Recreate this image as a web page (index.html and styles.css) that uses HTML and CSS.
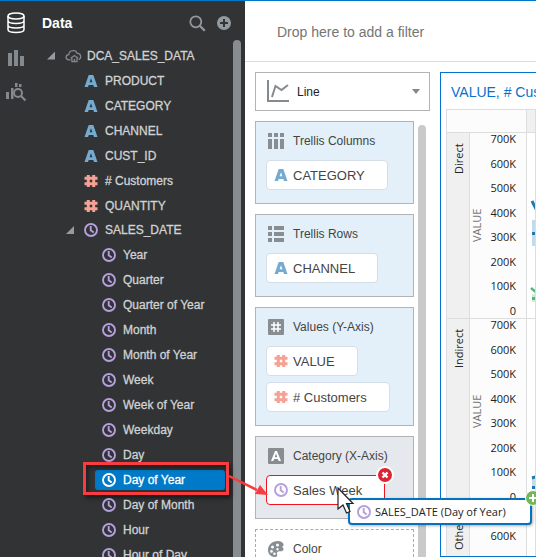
FILE: index.html
```html
<!DOCTYPE html>
<html lang="en">
<head>
<meta charset="utf-8">
<title>Data visualization</title>
<link rel="stylesheet" href="styles.css">
</head>
<body>
<svg class="defs" aria-hidden="true">
  <symbol id="attr" viewBox="0 0 14 12"><path fill-rule="evenodd" d="M4.700 0h4.600l4.200 12h-3.500l-.7-2H4.700L4 12H.5zM7 3.300L5.600 7.300h2.800z"/></symbol>
  <symbol id="hash" viewBox="0 0 14 12"><path d="M4.300 0v12M9.700 0v12M.5 3.300h13M.5 8.700h13" fill="none" stroke="currentColor" stroke-width="3"/></symbol>
  <symbol id="clock" viewBox="0 0 14 14"><circle cx="7" cy="7" r="6" fill="none" stroke="currentColor" stroke-width="1.900"/><path d="M6.700 3v4.200l3 2.200" fill="none" stroke="currentColor" stroke-width="1.900"/></symbol>
</svg>
<div class="app">
  <nav class="rail" aria-label="Panels">
    <button class="rail-button active" aria-label="Data"><svg width="18" height="22" viewBox="0 0 18 22"><g fill="none" stroke="currentColor" stroke-width="1.500"><ellipse cx="9" cy="4" rx="8" ry="3"/><path d="M1 4v13.500c0 4 16 4 16 0V4M1 8.500c0 4 16 4 16 0M1 13c0 4 16 4 16 0"/></g></svg></button>
    <button class="rail-button" aria-label="Visualizations"><svg width="18" height="18" viewBox="0 0 18 18"><path d="M1 4h4v13H1zM7 1h4v16H7zM13 7h4v10h-4z"/></svg></button>
    <button class="rail-button" aria-label="Analytics"><svg width="21" height="20" viewBox="0 0 21 20"><path d="M0 10h3v7H0zM5 6h2.500v11H5zM9 1h2.500v4H9zM13 2h2.500v3H13z"/><circle cx="12" cy="11" r="4" fill="none" stroke="currentColor" stroke-width="2"/><path d="M15 14l4.500 4.500" stroke="currentColor" stroke-width="2.200"/></svg></button>
  </nav>
  <aside class="sidebar">
    <header class="sidebar-head">
      <h1>Data</h1>
      <button aria-label="Search"><svg width="17" height="17" viewBox="0 0 17 17"><circle cx="6.800" cy="6.800" r="5.500" fill="none" stroke="currentColor" stroke-width="1.800"/><path d="M10.800 10.800l5 5" stroke="currentColor" stroke-width="2.200"/></svg></button>
      <button aria-label="Add"><svg width="14" height="14" viewBox="0 0 14 14"><circle cx="7" cy="7" r="7"/><path d="M7 3v8M3 7h8" stroke="#313335" stroke-width="2"/></svg></button>
    </header>
    <div class="tree-area">
      <ul class="tree">
        <li class="root"><i class="twisty"></i><svg class="cloud" width="17" height="14" viewBox="0 0 18 14"><g fill="none" stroke="currentColor" stroke-width="1.300"><path d="M6 11H4.200C.3 11 0 6 4 5.600 4.500 0 12 0 12.800 4.300c4.600-.3 4.800 5.600 1.700 6.500"/><path d="M6 9.300l4-2.800 4 2.800M7.300 9v4h5.400V9"/></g><path d="M9.200 10h1.600v3H9.200z"/></svg>DCA_SALES_DATA</li>
        <li class="field"><svg class="ico attr"><use href="#attr"/></svg>PRODUCT</li>
        <li class="field"><svg class="ico attr"><use href="#attr"/></svg>CATEGORY</li>
        <li class="field"><svg class="ico attr"><use href="#attr"/></svg>CHANNEL</li>
        <li class="field"><svg class="ico attr"><use href="#attr"/></svg>CUST_ID</li>
        <li class="field"><svg class="ico hash"><use href="#hash"/></svg># Customers</li>
        <li class="field"><svg class="ico hash"><use href="#hash"/></svg>QUANTITY</li>
        <li class="date"><i class="twisty"></i><svg class="ico clock"><use href="#clock"/></svg>SALES_DATE</li>
        <li class="part"><svg class="ico clock"><use href="#clock"/></svg>Year</li>
        <li class="part"><svg class="ico clock"><use href="#clock"/></svg>Quarter</li>
        <li class="part"><svg class="ico clock"><use href="#clock"/></svg>Quarter of Year</li>
        <li class="part"><svg class="ico clock"><use href="#clock"/></svg>Month</li>
        <li class="part"><svg class="ico clock"><use href="#clock"/></svg>Month of Year</li>
        <li class="part"><svg class="ico clock"><use href="#clock"/></svg>Week</li>
        <li class="part"><svg class="ico clock"><use href="#clock"/></svg>Week of Year</li>
        <li class="part"><svg class="ico clock"><use href="#clock"/></svg>Weekday</li>
        <li class="part"><svg class="ico clock"><use href="#clock"/></svg>Day</li>
        <li class="part selected"><span class="pick"><svg class="ico clock"><use href="#clock"/></svg>Day of Year</span><span class="callout"></span></li>
        <li class="part"><svg class="ico clock"><use href="#clock"/></svg>Day of Month</li>
        <li class="part"><svg class="ico clock"><use href="#clock"/></svg>Hour</li>
        <li class="part"><svg class="ico clock"><use href="#clock"/></svg>Hour of Day</li>
      </ul>
      <div class="scroll"></div>
    </div>
  </aside>
  <main class="main">
    <div class="filter-bar">Drop here to add a filter</div>
    <div class="work">
      <section class="grammar">
        <div class="type-box">
          <svg class="type-icon" width="22" height="22" viewBox="0 0 22 22"><path d="M1 0v21h21" fill="none" stroke="currentColor" stroke-width="2"/><path d="M5 17L8.500 6l6 4L21 5" fill="none" stroke="currentColor" stroke-width="2"/></svg>
          <select class="type" aria-label="Visualization type"><option>Line</option></select>
        </div>
        <div class="shelves-area">
          <div class="shelves">
            <section class="shelf">
              <h2><svg class="sico"><path d="M0 0h4v4H0zM6 0h4v4H6zM12 0h4v4h-4zM0 6h4v10H0zM6 6h4v10H6zM12 6h4v10h-4z"/></svg>Trellis Columns</h2>
              <div class="chip"><svg class="ico attr"><use href="#attr"/></svg>CATEGORY</div>
            </section>
            <section class="shelf">
              <h2><svg class="sico"><path d="M0 0h4v4H0zM6 0h10v4H6zM0 6h4v4H0zM6 6h10v4H6zM0 12h4v4H0zM6 12h10v4H6z"/></svg>Trellis Rows</h2>
              <div class="chip"><svg class="ico attr"><use href="#attr"/></svg>CHANNEL</div>
            </section>
            <section class="shelf">
              <h2><svg class="sico"><rect width="16" height="16" rx="1"/><path d="M6 3v10M10 3v10M3 6h10M3 10h10" stroke="#fff" stroke-width="1.500"/></svg>Values (Y-Axis)</h2>
              <div class="chip"><svg class="ico hash"><use href="#hash"/></svg>VALUE</div>
              <div class="chip"><svg class="ico hash"><use href="#hash"/></svg># Customers</div>
            </section>
            <section class="shelf over">
              <h2><svg class="sico"><rect width="16" height="16" rx="1"/><path d="M7 3h2l4 10h-2.300l-.8-2H6.100l-.8 2H3zM8 5.500L6.700 9.200h2.600z" fill="#fff" fill-rule="evenodd"/></svg>Category (X-Axis)</h2>
              <div class="chip target"><svg class="ico clock"><use href="#clock"/></svg>Sales Week
                <button class="remove" aria-label="Remove"><svg width="18" height="18" viewBox="0 0 18 18"><circle cx="9" cy="9" r="8" fill="#dc2433" stroke="#fff" stroke-width="2"/><path d="M6.500 6.500l5 5M11.500 6.500l-5 5" stroke="#fff" stroke-width="2.400"/></svg></button>
              </div>
            </section>
            <section class="shelf empty">
              <h2><svg class="sico"><path fill-rule="evenodd" d="M10 0C4 0 0 4 0 9c0 4 3 7 6.500 7 3 0 3-1.500 2.500-3-.5-2 1-3 3-2.700 2 .2 3.500-.8 3.500-2.300 0-1.300-.8-1.800-2-2 2-.6 2.500-2 1.800-3.300C14.300 1 12.500 0 10 0zM4.500 4.500a1.500 1.500 0 1 1 0 3 1.500 1.500 0 0 1 0-3zM9.500 2.500a1.500 1.500 0 1 1 0 3 1.500 1.500 0 0 1 0-3zM3.500 9a1.400 1.400 0 1 1 0 2.800 1.400 1.400 0 0 1 0-2.800zM9.500 7a1.200 1.200 0 1 1 0 2.400 1.200 1.200 0 0 1 0-2.400zM6.500 11.500a1.300 1.300 0 1 1 0 2.600 1.300 1.300 0 0 1 0-2.600z"/></svg>Color</h2>
            </section>
          </div>
          <div class="scroll light"></div>
        </div>
      </section>
      <section class="viz">
        <h2 class="viz-title">VALUE, # Customers</h2>
        <div class="trellis">
          <div class="corner"></div><div class="col-head"></div>
          <div class="row-head">Direct</div>
          <div class="axis"><span class="axis-name">VALUE</span><div class="ticks"><span>700K</span><span>600K</span><span>500K</span><span>400K</span><span>300K</span><span>200K</span><span>100K</span><span>0</span></div></div>
          <div class="plot"><svg width="10" height="186"><path d="M5 68l6 12" stroke="#1f78b0" stroke-width="3"/><path d="M5 87h6v26H5z" fill="#c3daea"/><path d="M5 99h3v3H5z" fill="#1f78b0"/><path d="M4 155l6 5" stroke="#55b57c" stroke-width="2.500"/><path d="M5 161h6v8H5z" fill="#cdebd8"/><path d="M5 164h3v3H5z" fill="#55b57c"/></svg></div>
          <div class="row-head">Indirect</div>
          <div class="axis"><span class="axis-name">VALUE</span><div class="ticks"><span>700K</span><span>600K</span><span>500K</span><span>400K</span><span>300K</span><span>200K</span><span>100K</span><span>0</span></div></div>
          <div class="plot"><svg width="10" height="186"><path d="M5 158h6v12H5z" fill="#c3daea"/><path d="M5 159l6-2" stroke="#1f78b0" stroke-width="3"/><path d="M5 167h3v3H5z" fill="#1f78b0"/></svg></div>
          <div class="row-head">Others</div>
          <div class="axis"><span class="axis-name">VALUE</span><div class="ticks"><span>700K</span><span>600K</span><span>500K</span><span>400K</span><span>300K</span><span>200K</span><span>100K</span><span>0</span></div></div>
          <div class="plot"></div>
        </div>
      </section>
    </div>
  </main>
  <svg class="arrow" width="42" height="30" viewBox="0 0 42 30"><path d="M1 4l28 14" stroke="#f83c40" stroke-width="2.500"/><path d="M40 23l-13-1 5-9z" fill="#f83c40"/></svg>
  <div class="drag"><svg class="ico clock"><use href="#clock"/></svg>SALES_DATE (Day of Year)
    <svg class="plus" width="16" height="16" viewBox="0 0 16 16"><circle cx="8" cy="8" r="7.500" fill="#74b65a" stroke="#fff"/><path d="M8 4v8M4 8h8" stroke="#fff" stroke-width="2"/></svg>
  </div>
  <svg class="cursor" width="20" height="28" viewBox="0 0 20 28"><path d="M1 1v21l5-4 3.500 8 3.500-1.500-3.500-8H16z" fill="#fff" stroke="#222" stroke-width="1.200"/></svg>
</div>
</body>
</html>
```
FILE: styles.css
```css
* { box-sizing: border-box; }
body { margin: 0; font: 12px "Liberation Sans", Arial, sans-serif; color: #333; }
h1, h2, ul { margin: 0; padding: 0; }
button { border: 0; padding: 0; background: none; color: inherit; display: flex; }
svg { fill: currentColor; flex: none; display: block; }
.defs { position: absolute; width: 0; height: 0; }

.app { position: relative; display: flex; height: 100vh; overflow: hidden; border-top: 1px solid #0078c8; background: #fff; }

.rail { width: 32px; flex: none; display: flex; flex-direction: column; align-items: center; gap: 15px; padding-top: 11px; background: #313335; color: #84898d; }
.rail-button.active { color: #fff; }

.sidebar { width: 213px; flex: none; display: flex; flex-direction: column; background: #313335; color: #d0d2d3; }
.sidebar-head { display: flex; align-items: center; gap: 11px; height: 39px; flex: none; padding: 5px 14px 0 10px; color: #94999d; }
.sidebar-head h1 { flex: 1; font-size: 14px; color: #fff; }
.tree-area { display: flex; flex: 1; min-height: 0; padding-right: 4px; }
.tree { flex: 1; list-style: none; padding-top: 3px; -webkit-text-stroke: 0.3px currentColor; }
.tree li { display: flex; align-items: center; gap: 7px; height: 25px; white-space: nowrap; }
.tree .root { padding-left: 15px; gap: 5px; }
.tree .root .twisty { margin-right: 5px; }
.cloud { color: #85898c; }
.tree .field { padding-left: 52px; }
.tree .date { padding-left: 34px; height: 24px; }
.tree .date .twisty { margin-right: 3px; }
.tree .part { padding-left: 70px; position: relative; }
.twisty { width: 8px; height: 8px; background: #979b9e; clip-path: polygon(100% 0, 100% 100%, 0 100%); }
.tree .selected { padding: 0 8px 0 63px; }
.pick { flex: 1; display: flex; align-items: center; gap: 7px; height: 20px; padding-left: 7px; border-radius: 3px; background: #007ac8; color: #fff; }
.pick .ico.clock { color: #fff; }
.callout { position: absolute; left: 51px; right: 4px; top: -5px; height: 33px; border: 3px solid #f83c40; box-shadow: 2px 3px 4px rgba(0,0,0,.5), inset 2px 3px 4px rgba(0,0,0,.4); }
.scroll { width: 8px; border-radius: 4px 4px 0 0; background: #878c90; }
.scroll.light { background: #cacaca; margin-top: 4px; }

.ico { width: 14px; height: 12px; }
.ico.attr { color: #75abd0; }
.ico.hash { color: #f5a193; }
.ico.clock { height: 14px; color: #b59fdc; }

.main { flex: 1; min-width: 0; display: flex; flex-direction: column; }
.filter-bar { display: flex; align-items: center; height: 61px; flex: none; padding: 2px 0 0 32px; border-bottom: 1px solid #d7dde4; font-size: 14px; color: #757575; white-space: nowrap; }
.work { flex: 1; min-height: 0; display: flex; gap: 10px; padding: 10px 0 0 10px; }
.grammar { width: 175px; flex: none; display: flex; flex-direction: column; gap: 10px; }
.type-box { position: relative; flex: none; color: #848a8e; }
.type-icon { position: absolute; left: 12px; top: 8px; pointer-events: none; }
.type-box::after { content: ""; position: absolute; right: 10px; top: 17px; border: 4px solid transparent; border-top: 5px solid #81888d; border-bottom: 0; pointer-events: none; }
.type { appearance: none; display: block; width: 100%; height: 39px; padding: 0 24px 0 41px; border: 1px solid #b1b3b5; border-radius: 0; background: #fff; font: 12px "Liberation Sans", Arial, sans-serif; color: #222; }
.shelves-area { flex: 1; min-height: 0; display: flex; gap: 4px; }
.shelves { width: 159px; display: flex; flex-direction: column; gap: 10px; }
.shelf { flex: none; padding: 9px 10px 13px; border: 1px solid #b1b4b7; background: #e3f0fa; }
.shelf h2 { display: flex; align-items: center; gap: 9px; height: 20px; margin: 0 0 9px 2px; font-size: 12px; font-weight: 400; color: #444; }
.shelf.over { background: #e5e9ed; }
.shelf.empty { background: #fff; border: 1px dashed #aaa; }
.sico { width: 16px; height: 16px; color: #878d91; }
.chip { position: relative; display: flex; align-items: center; gap: 5px; width: fit-content; height: 30px; padding: 0 22px 0 7px; border: 1px solid #d3dee8; border-radius: 4px; background: #fff; font-size: 13px; color: #444; white-space: nowrap; }
.chip + .chip { margin-top: 6px; }
.target { border-color: #f01520; }
.remove { position: absolute; right: -10px; top: -10px; }

.viz { flex: 1; min-width: 0; overflow: hidden; border: 1px solid #0572ce; border-right: 0; padding-left: 5px; }
.viz-title { height: 36px; padding-left: 5px; font-size: 14px; font-weight: 400; line-height: 38px; color: #0572ce; white-space: nowrap; }
.trellis { display: grid; grid-template-columns: 23px 57px 1fr; grid-template-rows: 23px repeat(3, 186px); border-left: 1px solid #ddd; border-top: 1px solid #ddd; font: 11px "Open Sans", "Noto Sans", sans-serif; }
.trellis > div { border-right: 1px solid #ddd; border-bottom: 1px solid #ddd; }
.corner { grid-column: span 2; background: #fcfcfc; }
.col-head, .row-head { background: #f0f0f0; }
.row-head { display: flex; align-items: center; justify-content: flex-end; writing-mode: vertical-rl; transform: rotate(180deg); color: #222; }
.trellis > .row-head { border: 0; border-left: 1px solid #ddd; border-top: 1px solid #ddd; padding-bottom: 10px; }
.axis { display: flex; align-items: stretch; justify-content: space-between; padding-right: 10px; background: #fcfcfc; color: #222; }
.axis-name { writing-mode: vertical-rl; transform: rotate(180deg); text-align: center; color: #777; line-height: 14px; }
.ticks { display: flex; flex-direction: column; justify-content: space-between; padding-bottom: 1px; text-align: right; line-height: 12px; }
.plot { overflow: hidden; background: #fff; }

.arrow { position: absolute; left: 228px; top: 471px; }
.drag { position: absolute; left: 348px; top: 497px; display: flex; align-items: center; gap: 4px; width: 184px; height: 27px; padding-left: 7px; border: 2px solid #0572c0; border-radius: 4px; background: #fff; box-shadow: 1px 1px 3px rgba(0,0,0,.3); font: 11px "Open Sans", "Noto Sans", sans-serif; color: #222; white-space: nowrap; }
.plus { position: absolute; right: -11px; top: -10px; }
.cursor { position: absolute; left: 337px; top: 486px; }
```
